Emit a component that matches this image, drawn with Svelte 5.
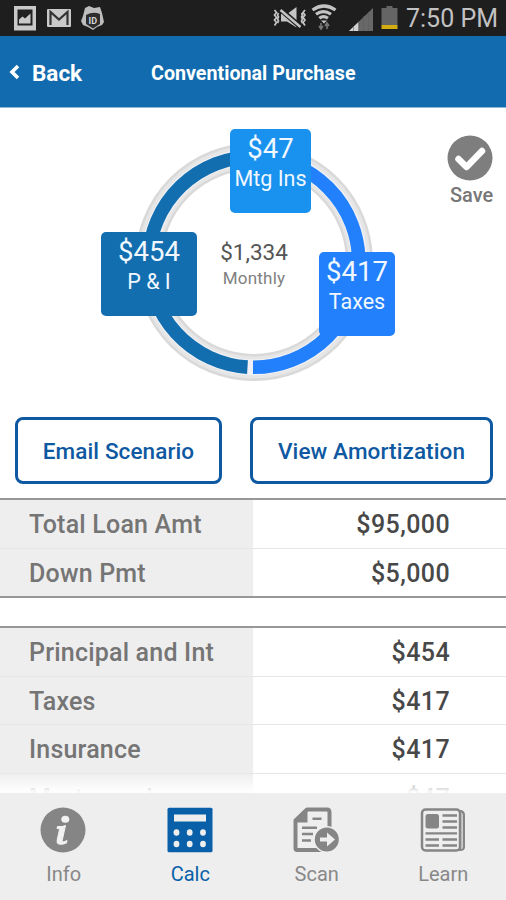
<script>
  let activeTab = $state('calc');

  const callouts = [
    { key: 'mi', amount: '$47', label: 'Mtg Ins' },
    { key: 'pi', amount: '$454', label: 'P & I' },
    { key: 'taxes', amount: '$417', label: 'Taxes' }
  ];

  const groups = [
    [
      { label: 'Total Loan Amt', value: '$95,000' },
      { label: 'Down Pmt', value: '$5,000' }
    ],
    [
      { label: 'Principal and Int', value: '$454' },
      { label: 'Taxes', value: '$417' },
      { label: 'Insurance', value: '$417' },
      { label: 'Mortgage Ins', value: '$47' }
    ]
  ];

  const tabs = [
    { key: 'info', name: 'Info' },
    { key: 'calc', name: 'Calc' },
    { key: 'scan', name: 'Scan' },
    { key: 'learn', name: 'Learn' }
  ];
</script>

<div class="screen">
  <div class="status">
    <svg class="notices" width="106" height="36" viewBox="0 0 106 36">
      <!-- picture -->
      <path d="M14 6h22v24.500h-22z" fill="#c9c9c9" />
      <path d="M17.500 9.500h15v16h-15z" fill="#222" />
      <path d="M19 23.500v-4l3.500-3 2.500 2 5.500-5v10z" fill="#c9c9c9" />
      <!-- mail -->
      <rect x="47" y="9" width="24" height="18" rx="1" fill="#c9c9c9" />
      <path d="M50.500 25V12l8.500 7.500 8.500-7.500v13" fill="none" stroke="#333" stroke-width="2.200" />
      <!-- id badge -->
      <path d="M85 8l4-2 5 2 6-1 2 6 2 9-2 3-5 2-4 3-5-3-5-2-2-4 2-5z" fill="#bdbdbd" />
      <path d="M86 15q7-4 14-1v10l-7 4.500-7-4.500z" fill="#2d2d2d" />
      <text x="92.800" y="23.500" class="id">ID</text>
    </svg>
    <svg class="signals" width="130" height="36" viewBox="270 0 130 36">
      <!-- vibrate / mute -->
      <g fill="none" stroke="#c4c4c4" stroke-width="1.700">
        <path d="M274.500 10l2 2.500-2 2.500 2 2.500-2 2.500 2 2.500-2 3M278.500 13l-1 2 1 2-1 2 1 2-1 2M305 10l-2 2.500 2 2.500-2 2.500 2 2.500-2 2.500 2 3M301.500 13l1 2-1 2 1 2-1 2 1 2" />
      </g>
      <path d="M281 14h6l9.500-7v20.500l-9.500-6h-6z" fill="#c4c4c4" />
      <path d="M280 9l20 17.500" stroke="#1e1e1e" stroke-width="5" />
      <path d="M280.500 10l20 17" stroke="#c4c4c4" stroke-width="2.500" />
      <!-- wifi -->
      <g fill="none" stroke="#c4c4c4" stroke-width="3.200">
        <path d="M312.500 10q11.500-8 23 0M316 14.300q7.500-5.500 15 0M319.300 18.300q4.300-3.400 8.600 0" />
      </g>
      <path d="M321 20.500h6l-3 3z" fill="#c4c4c4" />
      <path d="M321 23v5M319 26l2 3 2-3M327 29v-5M325 26l2-3 2 3" fill="none" stroke="#777" stroke-width="1.600" />
      <!-- signal -->
      <path d="M349 31l24-23v23z" fill="#686868" />
      <path d="M349 31l9.500-9v9z" fill="#d2d2d2" />
      <path d="M353.500 26v5M358.800 21v10M363.500 16v15M368.500 12v19" stroke="#5a5a5a" stroke-width=".5" />
      <!-- battery -->
      <path d="M381.500 8h5V6h6v2h5v17.500h-16z" fill="#656565" />
      <path d="M381.500 25h16v4h-16z" fill="#d2ad12" />
    </svg>
    <span class="clock">7:50 PM</span>
  </div>

  <header class="bar">
    <button class="back">
      <svg width="11" height="17" viewBox="0 0 11 17">
        <path d="M9 2L3 8l6 6" fill="none" stroke="#fff" stroke-width="3.600" />
      </svg>
      <span>Back</span>
    </button>
    <h1>Conventional Purchase</h1>
  </header>

  <section class="summary">
    <svg class="ring" width="240" height="240" viewBox="-120 -120 240 240">
      <circle r="105.500" fill="none" stroke="#d9d9d9" stroke-width="27" />
      <circle r="105.500" fill="none" stroke="#e6e6e6" stroke-width="22" />
      <circle r="105.300" fill="none" stroke="#f1f1f5" stroke-width="16" />
      <path d="M-6.500 105.100A105.300 105.300 0 0 1 0-105.300" fill="none" stroke="#126eaf" stroke-width="13.600" />
      <path d="M0-105.300A105.300 105.300 0 0 1-1 105.300" fill="none" stroke="#2280fd" stroke-width="13.600" />
    </svg>
    <div class="total">
      <strong>$1,334</strong>
      <span>Monthly</span>
    </div>
    {#each callouts as { key, amount, label }}
      <div class="callout {key}">
        <strong>{amount}</strong>
        <span>{label}</span>
      </div>
    {/each}
    <button class="save">
      <svg width="46" height="46" viewBox="0 0 46 46">
        <circle cx="23" cy="23" r="22.500" fill="#7e7e7e" />
        <path d="M11.500 24l8 8 15.500-16" fill="none" stroke="#fff" stroke-width="6.500" stroke-linecap="round" stroke-linejoin="round" />
      </svg>
      <span>Save</span>
    </button>
  </section>

  <div class="actions">
    <button class="email">Email Scenario</button>
    <button class="amort">View Amortization</button>
  </div>

  <main class="details">
    {#each groups as rows}
      <dl class="group">
        {#each rows as { label, value }}
          <div class="row">
            <dt>{label}</dt>
            <dd>{value}</dd>
          </div>
        {/each}
      </dl>
    {/each}
    <div class="fade"></div>
  </main>

  <nav class="tabs">
    {#each tabs as { key, name }}
      <button class="tab" class:active={activeTab === key} onclick={() => (activeTab = key)}>
        <svg width="46" height="46" viewBox="0 0 46 46">
          {#if key === 'info'}
            <circle cx="23" cy="23" r="22.500" fill="#858585" />
            <ellipse cx="25.300" cy="12.300" rx="4" ry="3.500" fill="#f2f2f2" />
            <path d="M17.500 19.500q5 .5 8-1l-3.300 15q0 2.500 4.800 0l-.5 2.500q-4 2-8 1-2-.5-1.300-4l2.300-10.500q0-1-2.500-1z" fill="#f2f2f2" stroke="#f2f2f2" stroke-width="1" />
          {:else if key === 'calc'}
            <rect x=".5" y=".7" width="45" height="44.500" rx="1.500" fill="#0960a8" />
            <rect x="7" y="7.500" width="32" height="7" fill="#eee" />
            {#each [9.5, 22.700, 36] as cx}
              <ellipse {cx} cy="25.500" rx="2.900" ry="3.300" fill="#eee" />
              <ellipse {cx} cy="37" rx="2.900" ry="3.300" fill="#eee" />
            {/each}
          {:else if key === 'scan'}
            <path d="M14 2.500h20q2.500 0 2.500 3v36q0 1.500-2 1.500H4q-1.500 0-1.500-2V13.500z" fill="#eee" stroke="#858585" stroke-width="4" stroke-linejoin="round" />
            <path d="M14.500 2v13.500H2v-2z" fill="#858585" />
            <path d="M19.500 11.800h9M9 20.800h15M9 27h11M9 33.500h9" stroke="#858585" stroke-width="2.500" />
            <circle cx="33.800" cy="32.500" r="13.500" fill="#eee" />
            <circle cx="33.800" cy="32.500" r="12" fill="#858585" />
            <path d="M27 30.500h7v-5l8 7-8 7v-5h-7z" fill="#eee" />
          {:else}
            <path d="M38 4h3q3 1 3 4v32q0 3-4 3h-4" fill="#ccc" stroke="#858585" stroke-width="2" />
            <rect x="2" y="2.500" width="38" height="41" rx="3.500" fill="#eee" stroke="#858585" stroke-width="2.500" />
            <rect x="5.500" y="7" width="13.500" height="14.500" rx="2.500" fill="#858585" />
            <path d="M22.500 8.500H37M22.500 14.500H37M22.500 20.500H37M5.500 26.300H37M5.500 32.500H19M22.500 32.500H37M5.500 38.500H19M22.500 38.500H37" stroke="#858585" stroke-width="2.300" />
          {/if}
        </svg>
        <span>{name}</span>
      </button>
    {/each}
  </nav>
</div>

<style>
  :global(body) {
    background: #fff;
  }
  .screen {
    display: flex;
    flex-direction: column;
    width: 506px;
    height: 900px;
    overflow: hidden;
    background: #fff;
    font-family: Roboto, "Liberation Sans", sans-serif;
  }
  button {
    margin: 0;
    padding: 0;
    border: 0;
    background: none;
    color: inherit;
    font: inherit;
    cursor: pointer;
  }
  .status {
    display: flex;
    flex: none;
    height: 36px;
    background: #1e1e1e;
    color: #c2c2c2;
  }
  .notices {
    margin-right: auto;
  }
  .id {
    font-size: 9px;
    font-weight: 700;
    fill: #d5d5d5;
    text-anchor: middle;
  }
  .clock {
    width: 106px;
    padding-left: 6px;
    box-sizing: border-box;
    font-size: 25px;
    line-height: 37px;
    white-space: nowrap;
  }
  .bar {
    display: flex;
    flex: none;
    align-items: center;
    height: 72px;
    box-sizing: border-box;
    padding-left: 9px;
    padding-top: 2px;
    border-bottom: 1px solid #8db9db;
    background: #116bae;
    color: #fff;
  }
  .back {
    display: flex;
    align-items: center;
    gap: 12px;
    width: 142px;
    font-size: 22.5px;
    font-weight: 700;
  }
  h1 {
    margin: 1px 0 0;
    font-size: 19.7px;
    font-weight: 700;
    white-space: nowrap;
  }
  .summary {
    position: relative;
    flex: none;
    height: 309px;
  }
  .ring {
    position: absolute;
    left: 134px;
    top: 34px;
  }
  .total,
  .callout,
  .save {
    position: absolute;
    display: flex;
    flex-direction: column;
    align-items: center;
    white-space: nowrap;
  }
  .total {
    left: 204px;
    top: 130px;
    width: 100px;
    color: #808080;
  }
  .total strong {
    color: #555;
    font-size: 22.5px;
    font-weight: 400;
    line-height: 29px;
  }
  .total span {
    font-size: 17px;
    letter-spacing: 0.2px;
    line-height: 22px;
  }
  .callout {
    height: 84px;
    border-radius: 5px;
    color: #f0f7ff;
  }
  .callout strong {
    font-size: 27.5px;
    font-weight: 400;
    line-height: 40px;
  }
  .callout span {
    font-size: 21.5px;
    line-height: 20px;
  }
  .mi {
    left: 230px;
    top: 21px;
    width: 81px;
    background: #1892ee;
  }
  .pi {
    left: 101px;
    top: 124px;
    width: 96px;
    background: #126eaf;
  }
  .taxes {
    left: 319px;
    top: 144px;
    width: 76px;
    background: #2280fd;
  }
  .save {
    left: 447px;
    top: 27px;
    color: #777;
    font-size: 20px;
    font-weight: 500;
  }
  .save span {
    margin-top: 2px;
    padding-left: 3px;
    line-height: 24px;
  }
  .actions {
    display: flex;
    flex: none;
    justify-content: space-between;
    height: 67px;
    padding: 0 13px 0 15px;
    margin-bottom: 14px;
  }
  .actions button {
    box-sizing: border-box;
    border: 3px solid #0e59a2;
    border-radius: 8px;
    color: #0e59a2;
    font-size: 22.5px;
    font-weight: 500;
    letter-spacing: 0.1px;
  }
  .email {
    width: 207px;
  }
  .amort {
    width: 243px;
  }
  .details {
    position: relative;
    flex: 1;
    min-height: 0;
    overflow: hidden;
  }
  .group {
    margin: 0 0 28px;
    border: solid #979797;
    border-width: 2px 0;
  }
  .row {
    display: flex;
    height: 48.5px;
    box-sizing: border-box;
    border-bottom: 1px solid #e6e6e6;
    font-size: 25px;
    font-weight: 500;
    line-height: 50px;
  }
  .row:last-child {
    height: 47.5px;
    border-bottom: 0;
  }
  dt {
    width: 253px;
    padding-left: 29px;
    box-sizing: border-box;
    background: #eee;
    color: #757575;
    letter-spacing: 0.2px;
  }
  dd {
    flex: 1;
    margin: 0;
    padding-right: 56px;
    color: #484848;
    letter-spacing: 0.4px;
    text-align: right;
  }
  .fade {
    position: absolute;
    left: 0;
    right: 0;
    bottom: 0;
    height: 20px;
    background: linear-gradient(rgba(255, 255, 255, 0), rgba(255, 255, 255, 0.95) 90%);
  }
  .tabs {
    display: flex;
    flex: none;
    height: 107px;
    background: #eee;
  }
  .tab {
    display: flex;
    flex: 1;
    flex-direction: column;
    align-items: center;
    padding-top: 14px;
    color: #888;
    font-size: 20px;
  }
  .tab span {
    margin-top: 9px;
    padding-left: 1px;
    line-height: 24px;
  }
  .tab.active {
    color: #0960a8;
  }
</style>
